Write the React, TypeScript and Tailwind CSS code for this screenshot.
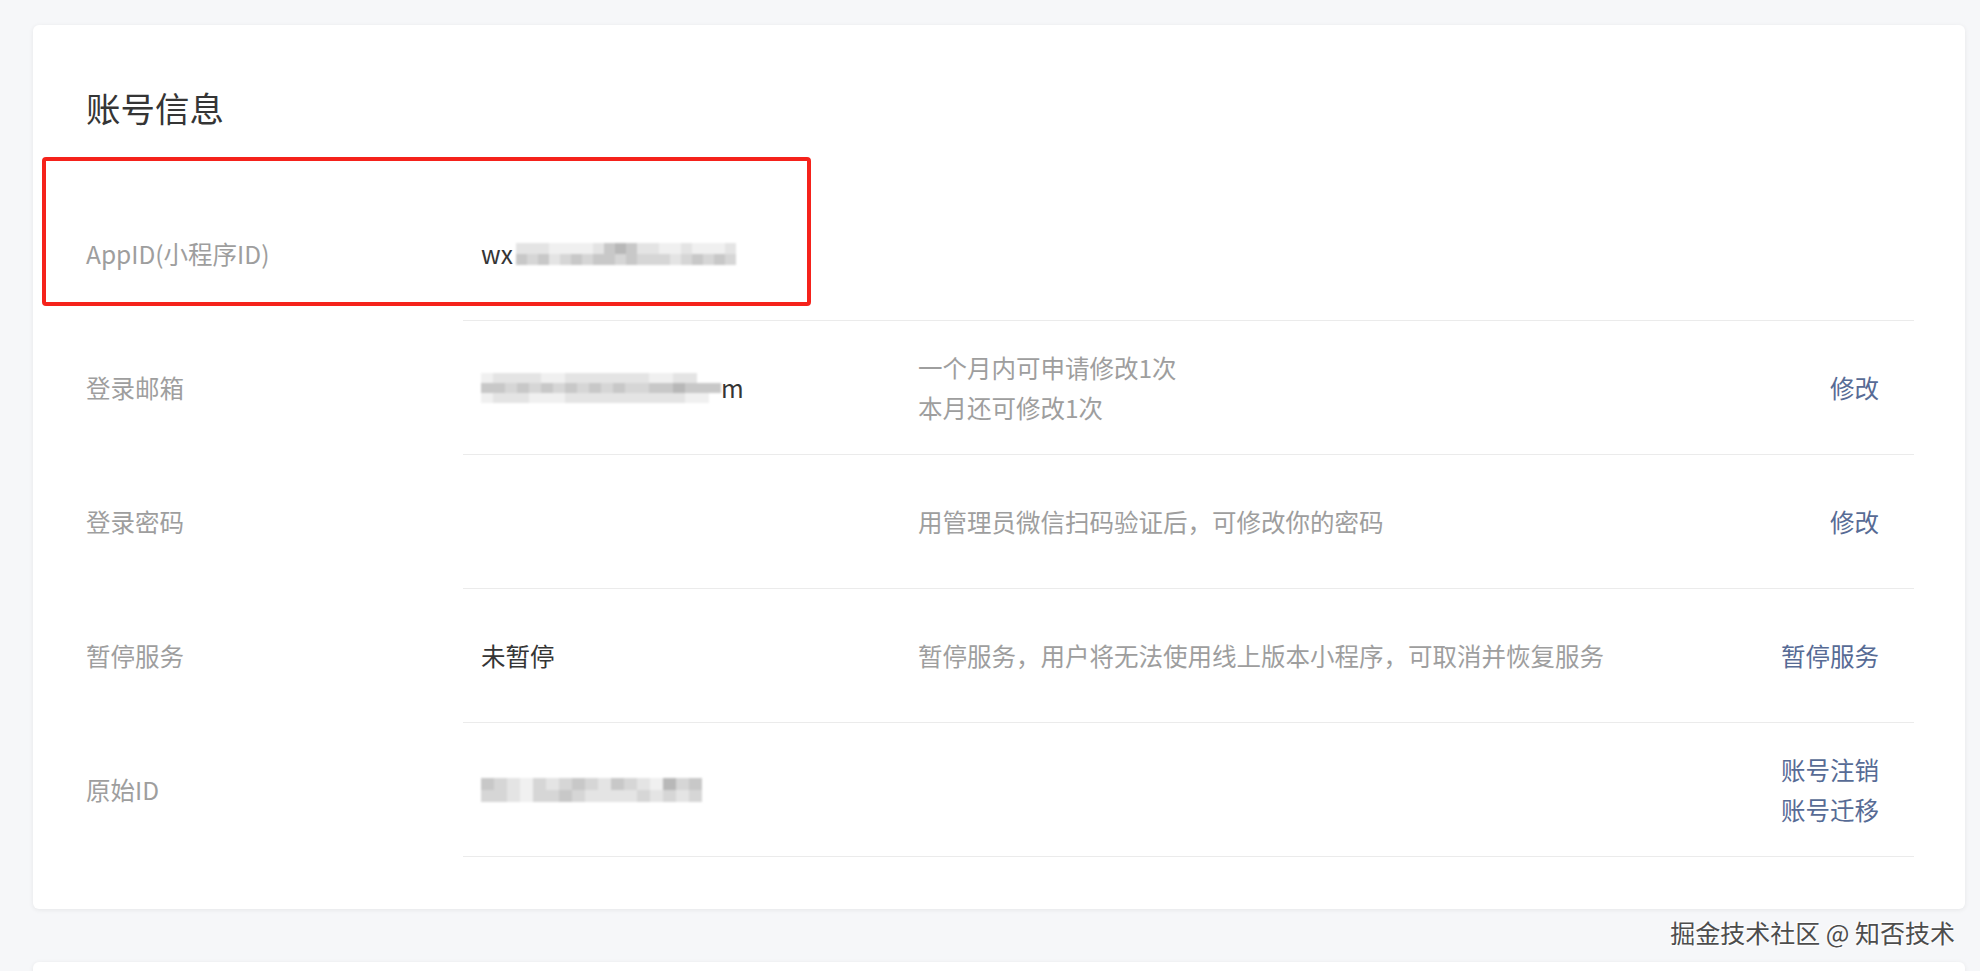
import type { ReactNode } from 'react'

// greys used by the masked-out values
const shade: Record<string, string> = {
  '.': 'bg-white',
  a: 'bg-[#f0f0f0]',
  b: 'bg-[#e4e4e4]',
  c: 'bg-[#d6d6d6]',
  d: 'bg-[#c8c8c8]',
  e: 'bg-[#b8b8b8]',
  f: 'bg-[#a4a4a4]',
}

function Mosaic({ rows, cell = 'w-[11px]', height = 'h-[11px]' }: { rows: string[]; cell?: string; height?: string }) {
  return (
    <span className="inline-flex flex-col blur-[1px]">
      {rows.map((row, r) => (
        <span key={r} className="flex">
          {row.split('').map((c, i) => (
            <span key={i} className={`${cell} ${height} ${shade[c]}`} />
          ))}
        </span>
      ))}
    </span>
  )
}

interface RowProps {
  label: string
  value?: ReactNode
  desc?: ReactNode
  actions?: string[]
}

function InfoRow({ label, value, desc, actions = [] }: RowProps) {
  return (
    <div className="flex h-[134px]">
      <div className="flex w-[377px] shrink-0 items-center text-[#9e9e9e]">{label}</div>
      <div className="flex flex-1 items-center border-b border-[#ebebeb] pl-[18px] pr-[35px]">
        <div className="flex w-[437px] shrink-0 items-center text-[#353535]">{value}</div>
        <div className="flex-1 text-[#9e9e9e]">{desc}</div>
        <div className="flex flex-col items-end text-[#576b95]">
          {actions.map((a) => (
            <a key={a} href="#" className="hover:underline">
              {a}
            </a>
          ))}
        </div>
      </div>
    </div>
  )
}

export default function App() {
  return (
    <div className="relative h-screen overflow-hidden bg-[#f6f7f9] pl-[33px] pr-[15px] pt-[25px] font-['Noto_Sans_CJK_SC',sans-serif] text-[24.5px] leading-[40px]">
      <section className="relative rounded-[6px] bg-white pb-[52px] pl-[53px] pr-[51px] pt-[58px] shadow-[0_1px_5px_rgba(0,0,0,0.07)]">
        <h2 className="text-[34.5px] font-normal leading-[48px] text-[#353535]">账号信息</h2>

        <div className="mt-[56px]">
          <InfoRow
            label="AppID(小程序ID)"
            value={
              <>
                <span>wx</span>
                <span className="ml-[3px] flex items-center">
                  <Mosaic rows={['bbbaaaabdedbbaabaaab', 'dcdbcdcddcdcccbcdcdc']} />
                </span>
              </>
            }
          />
          <InfoRow
            label="登录邮箱"
            value={
              <>
                <Mosaic
                  rows={['abbbbaabbbbbbbaabb..', 'ddcdcdcdcdcdccddeddd', 'abbbaaabbbbbbbbbbaa.']}
                  cell="w-[12px]"
                  height="h-[10px]"
                />
                <span>m</span>
              </>
            }
            desc={
              <>
                <div>一个月内可申请修改1次</div>
                <div>本月还可修改1次</div>
              </>
            }
            actions={['修改']}
          />
          <InfoRow label="登录密码" desc="用管理员微信扫码验证后，可修改你的密码" actions={['修改']} />
          <InfoRow
            label="暂停服务"
            value="未暂停"
            desc="暂停服务，用户将无法使用线上版本小程序，可取消并恢复服务"
            actions={['暂停服务']}
          />
          <InfoRow
            label="原始ID"
            value={<Mosaic rows={['dcbacbcdcbdcbaecd', 'ccbaccdcbbbbcbcbc']} cell="w-[13px]" height="h-[12px]" />}
            actions={['账号注销', '账号迁移']}
          />
        </div>

        {/* red frame around the AppID row */}
        <div className="pointer-events-none absolute left-[9px] top-[132px] h-[149px] w-[769px] rounded-[4px] border-[4px] border-[#f5221b]" />
      </section>

      <section className="mt-[53px] h-[200px] rounded-t-[6px] bg-white shadow-[0_1px_5px_rgba(0,0,0,0.07)]" />

      <div className="absolute right-[25px] top-[915px] text-[25px] leading-[34px] text-[#4d4d4d] [text-shadow:1px_1px_1px_#ffffff,-1px_-1px_1px_#ffffff]">
        掘金技术社区 @ 知否技术
      </div>
    </div>
  )
}
